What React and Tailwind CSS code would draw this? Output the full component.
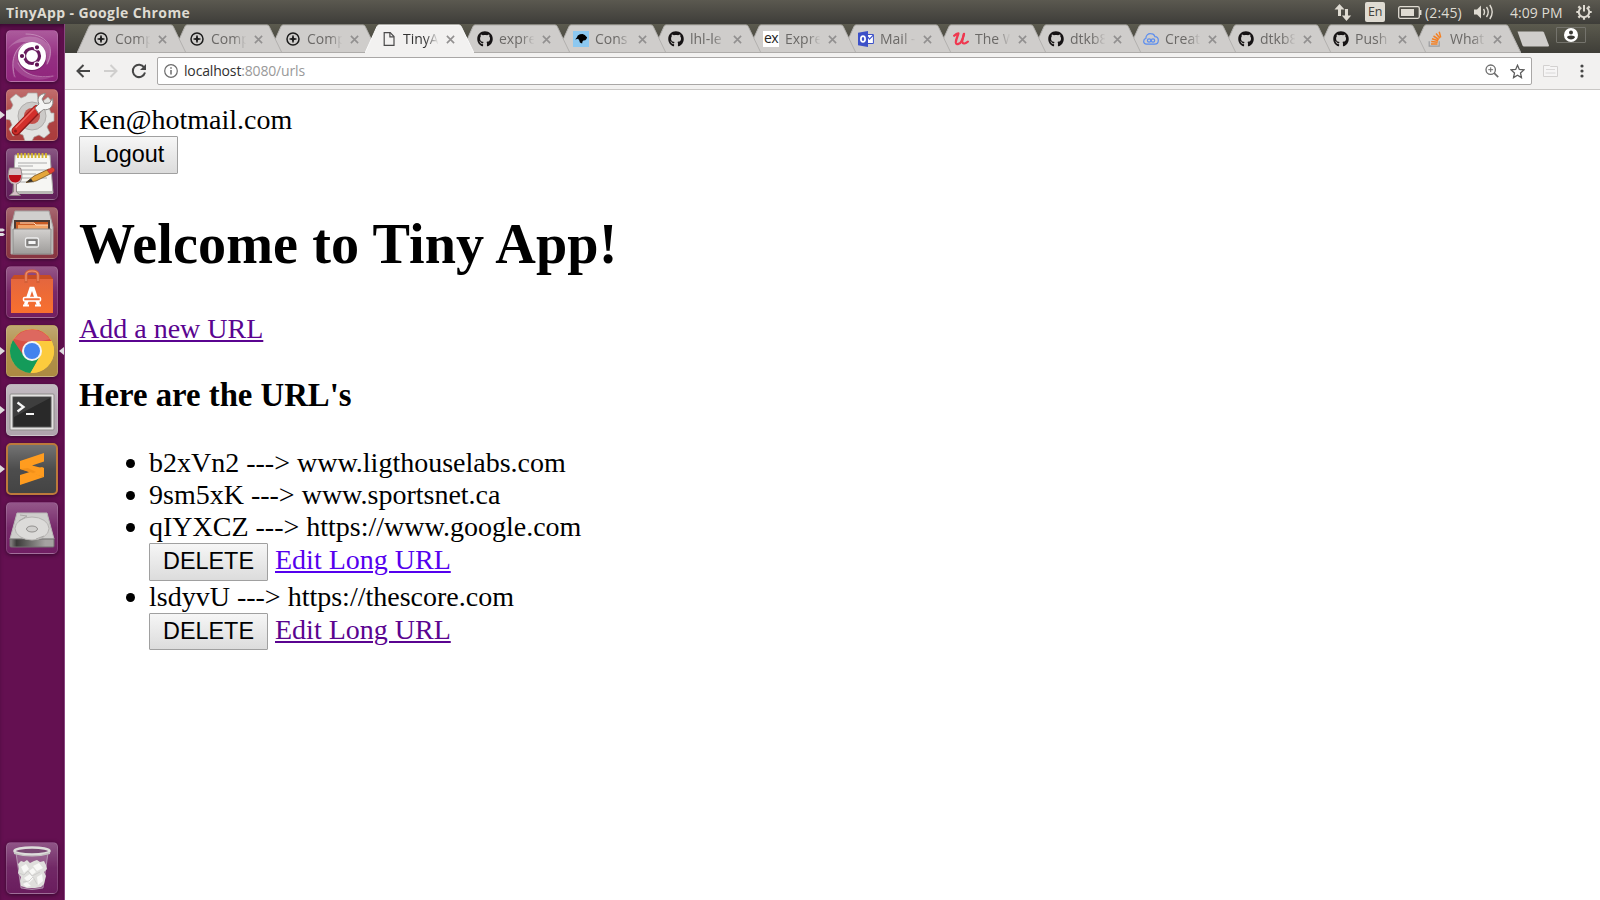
import React from "react";
import { FaGithub } from "react-icons/fa";

const UI = "font-['Open_Sans','Noto_Sans',sans-serif]";

/* ---------- favicons ---------- */
const Compass = () => (
  <svg viewBox="0 0 16 16" className="size-4 shrink-0">
    <circle cx="8" cy="8" r="6" fill="none" stroke="#1c1c1c" strokeWidth="1.5" />
    <path d="M8 4l1.1 2.9L12 8 9.1 9.1 8 12 6.9 9.1 4 8l2.9-1.1z" fill="#1c1c1c" />
    <path d="M8 4.6v6.8M4.6 8h6.8" stroke="#1c1c1c" strokeWidth="1.1" />
  </svg>
);
const Page = () => (
  <svg viewBox="0 0 16 16" className="size-4 shrink-0" fill="none" stroke="#4a4a4a" strokeWidth="1.2">
    <path d="M3.2 1.6h6l3.8 3.9v8.9H3.2z" />
    <path d="M8.9 1.8v4.1h4" />
  </svg>
);
const Github = () => <FaGithub className="size-4 shrink-0 text-[#161314]" />;
const Bird = () => (
  <svg viewBox="0 0 16 16" className="size-4 shrink-0">
    <rect width="16" height="16" fill="#8cc8f0" />
    <path d="M2.2 8.4l1.6-2 1-2 2.2-1.2 2.6-.1 2.2 1 1.3 1.5 1 .6-.6 1.8-1.2 1.3-1.9.1-.9 1.2-.4 1.9-2.2-1.1-.6-1.8-1.2-1.8z" fill="#000" />
  </svg>
);
const Express = () => (
  <span className="flex size-4 shrink-0 items-center justify-center bg-white pb-0.5 font-['Open_Sans',sans-serif] text-[14px] leading-none tracking-[-0.6px] text-[#222]">ex</span>
);
const Outlook = () => (
  <svg viewBox="0 0 16 16" className="size-4 shrink-0">
    <path d="M9 3.5h6.4v9H9z" fill="#fff" stroke="#3c50c8" strokeWidth="1" />
    <path d="M9.500 5.500l2 2.600 3.800-4" fill="none" stroke="#3c50c8" strokeWidth="1.200" />
    <path d="M0 1.800L10 0v16L0 14.200z" fill="#3c50c8" />
    <ellipse cx="5" cy="8" rx="2.100" ry="2.900" fill="none" stroke="#fff" strokeWidth="1.700" />
  </svg>
);
const Udemy = () => (
  <svg viewBox="0 0 16 16" className="size-4 shrink-0" fill="none" stroke="#ef3850" strokeLinecap="round" strokeLinejoin="round">
    <path d="M1.200 4.800C2.600 3.400 4 2.600 5.400 2.500 4.600 5.500 2.600 9 2.900 11.500c.5 3 4.200 1.300 5.600-1.300C9.800 8 10.500 5 11 2.800" strokeWidth="2.300" />
    <path d="M11 3C10.300 5.500 9 9.500 9.300 11.300c.5 2.200 3.700 1.200 5.700-.7" strokeWidth="2.100" />
  </svg>
);
const Cloud = () => (
  <svg viewBox="0 0 16 16" className="size-4 shrink-0" fill="none" stroke="#5b8def">
    <path d="M3.600 13.200C1.600 13 .6 11.700.7 10.200c0-1.500 1-2.500 2.200-2.800C2.800 4.500 5 2.600 7.600 2.700c2 0 3.700 1.100 4.300 2.900 2 .1 3.400 1.600 3.400 3.700 0 2.300-1.400 3.900-3.600 3.900z" strokeWidth="1.200" />
    <circle cx="6.100" cy="9.500" r="1.700" strokeWidth="1.200" />
    <circle cx="10" cy="9.500" r="1.700" strokeWidth="1.200" />
  </svg>
);
const Stack = () => (
  <svg viewBox="0 0 16 16" className="size-4 shrink-0" fill="none">
    <path d="M1.200 10.200v5h10v-5" stroke="#9a9c9f" strokeWidth="1.200" />
    <g stroke="#f48024" strokeWidth="1.500">
      <path d="M3 13h6.500M3.200 10.600l6.500.7M4 7.800l6.200 2M5.500 5l5.300 3.500M8 2.500l4 4.800M11.200.8l1.500 5.600" />
    </g>
  </svg>
);

const tabs = [
  ["Comp", Compass], ["Comp", Compass], ["Comp", Compass], ["TinyA", Page],
  ["expre", Github], ["Cons", Bird], ["lhl-le", Github], ["Expre", Express],
  ["Mail -", Outlook], ["The W", Udemy], ["dtkb8", Github], ["Creat", Cloud],
  ["dtkb8", Github], ["Push", Github], ["What", Stack],
];

function Tab({ label, Icon, active, z, wide }) {
  return (
    <div className={`relative h-[29px] w-[109px] shrink-0 ${wide ? "mr-[-13px]" : "mr-[-14px]"}`} style={{ zIndex: z }}>
      <svg viewBox="0 0 109 29" className="absolute inset-0 h-[29px] w-[109px]">
        <path d="M0 29L12 2.500Q12.800 1 14 1H94Q95.500 1 96.200 2.500L109 29z" fill={active ? "#f2f1f0" : "#cfcdcb"} />
        <path d="M0 29L12 2.500Q12.800 1 14 1H94Q95.500 1 96.200 2.500L109 29" fill="none" stroke={active ? "#fafafa" : "#b2b0ae"} strokeWidth="1" />
        {!active && <path d="M0 28.500H109" stroke="#aeacaa" />}
      </svg>
      <div className="relative flex h-[30px] items-center pl-4">
        <Icon />
        <span className={`ml-[6px] w-[37px] shrink-0 whitespace-nowrap text-[14px] leading-5 [mask-image:linear-gradient(to_right,black_60%,transparent_96%)] ${active ? "text-[#333]" : "text-[#6b6967]"}`}>{label}</span>
        <svg viewBox="0 0 10 10" className="ml-[6px] size-[9px]" stroke="#929090" strokeWidth="1.800">
          <path d="M1 1l8 8M9 1L1 9" />
        </svg>
      </div>
    </div>
  );
}

/* ---------- launcher artwork, each in a 52 x 52 box ---------- */
const Ubuntu = () => (
  <>
    <path d="M1 20C12 3 32 3 42 14c5 8 3 16-1 21-1-12-6-20-15-22C16 11 8 12 1 20z" fill="#fff" opacity=".2" />
    <path d="M8 48C3 32 8 17 20 12c-9 8-9 18-3 26s20 12 34 7c-16 8-34 6-43-8z" fill="#fff" opacity=".14" />
    <g fill="none" stroke="#fff" strokeLinecap="round" opacity=".3" strokeWidth="1">
      <path d="M20 4c12 0 20 4 24 13 1 5 0 12-3 17" />
      <path d="M9 47C4 32 8 18 20 13" />
      <path d="M47 46C33 48 18 46 12 33" />
    </g>
    <circle cx="26" cy="26.500" r="14.500" fill="#4d0c45" opacity=".4" />
    <circle cx="26" cy="26" r="14" fill="#fff" />
    <circle cx="26" cy="26" r="7.500" fill="none" stroke="#681a5d" strokeWidth="3.200" />
    <g fill="#5e1352" stroke="#fff" strokeWidth="1.200">
      <circle cx="16" cy="26" r="2.700" /><circle cx="31" cy="17.300" r="2.700" /><circle cx="31" cy="34.700" r="2.700" />
    </g>
  </>
);
const Settings = () => (
  <>
    <path d="M22 4h9l1 6 5 2 5-4 5 6-4 5 2 5h3v8l-5 2-2 4 3 6-6 5-5-3-5 2-2 4h-7l-2-6-5-2-5 3-4-7 3-4-2-5-5-1v-8l6-2 2-4-3-6 6-5 5 4 5-2z" fill="#e4e4e2" stroke="#aaa7a4" strokeWidth=".7" />
    <circle cx="26" cy="27" r="14" fill="#cccac8" stroke="#b0aeac" />
    <circle cx="26" cy="27" r="8" fill="#c4514b" />
    <path d="M10 42L31 20.500" stroke="#8f1a1a" strokeWidth="9" strokeLinecap="round" />
    <path d="M10 41.500L31 20" stroke="#d22f2b" strokeWidth="7" strokeLinecap="round" />
    <path d="M10 38.500L28 20" stroke="#ee6a61" strokeWidth="1.300" strokeLinecap="round" />
    <path d="M29 19l4-4c-3-6 1-10.500 6.500-10.500l-3.500 5.500 2.500 4.500 5-.5 3-4.500c2 7-3 12.500-9 11l-5 4z" fill="#f4f4f3" stroke="#8b8987" />
    <circle cx="9.500" cy="42" r="1.500" fill="#8e1c1c" />
  </>
);
const Notes = () => (
  <>
    <path d="M9 7h35l3 38H7z" fill="#f6f6f3" stroke="#a9a7a5" />
    <path d="M7 43h40v3H7z" fill="#b9b8b5" />
    <path d="M12 15h29M12 18h15M12 22h29M12 26h18M12 30h29M12 34h16" stroke="#aaa" strokeWidth="1" />
    <path d="M12 5v5M15.500 5v5M19 5v5M22.500 5v5M26 5v5M29.500 5v5M33 5v5M36.500 5v5M40 5v5" stroke="#d5b52b" strokeWidth="1.800" />
    <path d="M20 34.500l8-6.500 15-7 3 4-16 8z" fill="#e5a63a" stroke="#744f1d" strokeWidth=".8" />
    <path d="M41 22l5-2.500c2.500 0 3.500 3 1.500 4.500L44 26z" fill="#dc4035" stroke="#8d3427" strokeWidth=".5" />
    <path d="M20 34.500l5-4 2 3z" fill="#333" />
    <path d="M3.500 20h11c3 9 1 15-4 16v8l4 3.500h-11l4-3.500v-8c-5-1-7-7-4-16z" fill="#d5bfc6" stroke="#8b8181" strokeWidth=".9" />
    <path d="M3 27h12c.5 4-1.500 7-5.500 7.500C5 34.500 2.500 31 3 27z" fill="#bb0d1a" />
  </>
);
const Files = () => (
  <>
    <path d="M9 4h34l4 16v27H5V20z" fill="#d0cfcd" stroke="#a5a3a1" />
    <path d="M8 13h36v12H8z" fill="#4b3a33" />
    <path d="M10 15h32v9H10z" fill="#c95c24" /><path d="M12 18h30v5H12z" fill="#f1a467" />
    <path d="M14 16h14l2 2h12" stroke="#fdddc0" fill="none" />
    <path d="M7 22h38v25H7z" fill="url(#steel)" stroke="#8b8987" />
    <rect x="19.500" y="31" width="13" height="9" rx="1.500" fill="#8a8886" stroke="#eee" strokeWidth="1.300" />
    <rect x="22" y="33.500" width="8" height="4" fill="#f6f6f6" stroke="#666" strokeWidth=".7" />
  </>
);
const Software = () => (
  <>
    <path d="M5 13h42v34H5z" fill="url(#bag)" />
    <path d="M5 13l3-4h36l3 4z" fill="#c74c24" />
    <path d="M20 17V9q0-4 6-4t6 4v8" fill="none" stroke="#d35f38" strokeWidth="3.200" />
    <path d="M20 15V9q0-4 6-4t6 4v6" fill="none" stroke="#f19370" strokeWidth="1.200" />
    <g fill="none" stroke="#fff" strokeWidth="3.500"><path d="M19.500 39L25 22.500h2L32.500 39" /><path d="M17 39.500h6M29 39.500h6" strokeWidth="2.200" /></g>
    <rect x="17.500" y="31.500" width="17" height="3.600" rx="1" fill="#f26d3a" stroke="#fff" strokeWidth="1.500" />
  </>
);
const Chrome = () => (
  <>
    <circle cx="26" cy="26" r="22" fill="#fccb3d" />
    <path d="M26 26L7 15A22 22 0 0 0 24.500 48L34 31z" fill="#149b5a" />
    <path d="M7 15a22 22 0 0 1 38.500 1H26l-9.500 13z" fill="#d85045" />
    <path d="M26 16h19.500A22 22 0 0 1 24.500 48L34.500 31z" fill="#fccb3d" />
    <path d="M8 14a22 22 0 0 1 36 0Q26 20 8 14z" fill="#fff" opacity=".14" />
    <circle cx="26" cy="26" r="10" fill="#f5f5f5" />
    <circle cx="26" cy="26" r="8" fill="#4383ee" />
  </>
);
const Terminal = () => (
  <>
    <rect x="4" y="10" width="44" height="36" rx="1" fill="#e3e2e1" stroke="#8f8d8b" />
    <rect x="7" y="13" width="38" height="30" fill="#292929" stroke="#565656" />
    <path d="M8 14h36L8 33z" fill="#fff" opacity=".1" />
    <path d="M11.500 18.500l6 4.500-6 4.500" fill="none" stroke="#f5f5f5" strokeWidth="2.300" />
    <path d="M20 30h8" stroke="#f5f5f5" strokeWidth="2" />
  </>
);
const Sublime = () => (
  <>
    <path d="M14 25L38 34 14 42V32l13-4z" fill="#ff9c1f" />
    <path d="M14 18L38 10V18.500L26 22.500 38 25.500V34L14 26z" fill="#ff9c1f" />
    <path d="M38 34V25l-2-1-14 5z" fill="#ff9c1f" />
    <path d="M14 26l13 4 3-1-8-4z" fill="#e98916" opacity=".6" />
  </>
);
const Disk = () => (
  <>
    <path d="M11 11h30l7 26H4z" fill="#cfcecc" stroke="#b9b8b6" />
    <path d="M4 37h44v7q0 1-1 1H5q-1 0-1-1z" fill="url(#edge)" stroke="#737170" />
    <ellipse cx="26" cy="26.500" rx="17" ry="11.500" fill="#dcdbd9" stroke="#b4b2b0" />
    <ellipse cx="26" cy="27" rx="5.500" ry="3" fill="#d0cfcd" stroke="#92908e" />
    <path d="M14 13l7 1-8 5M30 37l8-3" fill="none" stroke="#aaa8a6" />
  </>
);
const Trash = () => (
  <>
    <path d="M10 11l5 35q11 3 22 0l5-35z" fill="#fff" opacity=".2" />
    <path d="M10 11l5 35q11 3 22 0l5-35" fill="none" stroke="#cfc3ce" opacity=".6" />
    <path d="M12 22l3-3 3 1 3-2 3 3 4-2 3-1 3 2 4-1 2 4 1 4-3 3 2 4-1 4-1 4-3 3-6 1-8 0-6-2-1-5 1-4-3-4 1-4z" fill="#dfdfdc" />
    <path d="M15 25l5-3 3 5-5 4zM27 24l6-3 4 5-6 3zM18 36l6-4 4 4-5 5zM31 35l5-3 1 7-5 4zM23 29l4-3 3 4-4 3zM17 42l4-2 4 4-5 1z" fill="#f8f8f6" />
    <path d="M13 31l5 2 4-4 4 5 8-4M17 40l6-1 4-4 4 7" fill="none" stroke="#c9c8c6" strokeWidth=".8" />
    <ellipse cx="26" cy="9" rx="17.500" ry="3.500" fill="#794a73" stroke="#dededc" strokeWidth="2.600" />
    <path d="M8 10q18 7 36 0v2q-18 5-36 0z" fill="#c6c5c3" />
  </>
);

const launcher = [
  [Ubuntu, "bg-[#90257c]"],
  [Settings, "bg-[#ab3c3c]", "l"],
  [Notes, "bg-[#62205a]"],
  [Files, "bg-[#883541]", "ll"],
  [Software, "bg-[#721e60]"],
  [Chrome, "bg-[#ac8b42]", "lr"],
  [Terminal, "bg-[#b0a5ae]", "l"],
  [Sublime, "bg-[#444] border-[#bd793b]! border-2!", "l"],
  [Disk, "bg-[#701f63]"],
];

function Tile({ Art, tone, marks = "" }) {
  return (
    <div className="relative flex h-[52px] w-full shrink-0 pl-[6px]">
      <div className={`flex size-[52px] items-center justify-center rounded-[5px] border border-white/15 bg-linear-to-b from-white/25 via-white/5 to-transparent shadow-[0_1px_4px_rgba(20,0,20,0.600)] ${tone}`}>
        <svg viewBox="0 0 52 52" className="size-[52px] shrink-0"><Art /></svg>
      </div>
      {marks.startsWith("l") && (
        <svg viewBox="0 0 5 10" className="absolute top-[21px] left-0 h-[10px] w-[5px]" fill="#dedbdd">
          {marks === "ll" ? <path d="M0 .5h3l2 1.500-2 1.500H0zM0 5h3l2 1.500L3 8H0z" /> : <path d="M0 1l5 4-5 4z" />}
        </svg>
      )}
      {marks === "lr" && (
        <svg viewBox="0 0 5 10" className="absolute top-[21px] right-0 h-[10px] w-[5px]" fill="#dedbdd"><path d="M5 1L0 5l5 4z" /></svg>
      )}
    </div>
  );
}

function Launcher() {
  return (
    <aside className="flex w-[65px] shrink-0 flex-col gap-[7px] border-r border-[#8b4580] bg-[#641051] pt-[6px] pb-[6px] shadow-[inset_0_4px_5px_-2px_rgba(20,0,20,0.600)]">
      <svg className="absolute size-0">
        <defs>
          <linearGradient id="steel" x1="0" y1="0" x2="0" y2="1"><stop stopColor="#d2d0ce" /><stop offset="1" stopColor="#9e9c9a" /></linearGradient>
          <linearGradient id="bag" x1="0" y1="0" x2="0" y2="1"><stop stopColor="#e4663e" /><stop offset="1" stopColor="#f8702e" /></linearGradient>
          <linearGradient id="edge"><stop stopColor="#8d8b89" /><stop offset=".15" stopColor="#3b3a39" /><stop offset=".8" stopColor="#a5a3a1" /></linearGradient>
        </defs>
      </svg>
      {launcher.map(([Art, tone, marks], i) => <Tile key={i} Art={Art} tone={tone} marks={marks} />)}
      <div className="mt-auto"><Tile Art={Trash} tone="bg-[#6a1d5e]" /></div>
    </aside>
  );
}

function MenuBar() {
  return (
    <header className={`flex h-6 shrink-0 items-center bg-linear-to-b from-[#5b5950] to-[#3e3d39] pr-[8px] pl-[6px] text-[14px] text-[#dfdbd2] ${UI}`}>
      <span className="text-[14px] font-bold tracking-[0.380px] whitespace-nowrap">TinyApp - Google Chrome</span>
      <svg viewBox="0 0 18 17" className="ml-auto h-[17px] w-[18px]" fill="#dfdbd2">
        <path d="M5.500 0L10.500 5.500H7V12H4V5.500H.5zM12.500 17L7.800 11.500h3.200V5h3v6.500h3.200z" />
      </svg>
      <span className="ml-[13px] flex h-5 w-5 items-center justify-center rounded-[2px] bg-[#dfdbd2] text-[12.500px] tracking-[-0.200px] text-[#42413c]">En</span>
      <svg viewBox="0 0 24 13" className="ml-[13px] h-[13px] w-6" fill="none" stroke="#dfdbd2">
        <rect x=".7" y=".7" width="20.600" height="11.600" rx="1.500" strokeWidth="1.300" />
        <rect x="3" y="3" width="13" height="7" fill="#dfdbd2" stroke="none" />
        <path d="M22.700 4v5" strokeWidth="1.500" />
      </svg>
      <span className="ml-[3px] w-[37px] whitespace-nowrap tracking-[0.150px]">(2:45)</span>
      <svg viewBox="0 0 21 16" className="ml-[12px] h-4 w-[21px]" fill="none" stroke="#dfdbd2" strokeWidth="1.400">
        <path d="M0 5.500h3l4-4v13l-4-4H0z" fill="#dfdbd2" stroke="none" />
        <path d="M9.500 5q2 3 0 6M12.500 3q3.500 5 0 10M15.800 1q4.800 7 0 14" />
      </svg>
      <span className="ml-[15px] w-[53px] whitespace-nowrap tracking-[0.050px]">4:09 PM</span>
      <svg viewBox="0 0 16 16" className="ml-[13px] size-4" fill="none" stroke="#dfdbd2">
        <path d="M5.300 3.600a5.200 5.200 0 1 0 5.400 0" strokeWidth="1.900" />
        <path d="M8 1v6.500" strokeWidth="2" />
        <path d="M3.800 3.800L2.400 2.400M2.500 8H.3M4 12l-1.600 1.600M8 13.500v2.300M12 12l1.600 1.600M13.500 8h2.200M12.200 3.800l1.400-1.400" strokeWidth="2.200" />
      </svg>
    </header>
  );
}

function TabStrip() {
  return (
    <div className={`flex h-[29px] shrink-0 bg-linear-to-b from-[#5b5a4e] to-[#3f3e38] pl-[12px] ${UI}`}>
      {tabs.map(([label, Icon], i) => (
        <Tab key={i} label={label} Icon={Icon} active={i === 3} wide={i < 5} z={i === 3 ? 30 : 20 - i} />
      ))}
      <svg viewBox="0 0 34 16" className="mt-[7px] ml-[9px] h-4 w-[34px] shrink-0"><path d="M1.500.5h25q1 0 1.500 1l5 13q0 1-1 1H8q-1 0-1.500-1z" fill="#cfcdcb" /></svg>
      <div className="mt-[3px] ml-[6px] flex h-[16px] w-[30px] shrink-0 items-center justify-center rounded-[1px] border border-[#74736c]">
        <svg viewBox="0 0 14 14" className="size-[14px]"><circle cx="7" cy="7" r="7" fill="#fff" /><circle cx="7" cy="4.400" r="2" fill="#3b3a35" /><path d="M3 9.500q0-2 4-2t4 2q-1.500 2-4 2t-4-2z" fill="#3b3a35" /></svg>
      </div>
    </div>
  );
}

function Toolbar() {
  return (
    <div className={`flex h-[37px] shrink-0 items-center border-b border-[#c9c7c5] bg-[#f2f1f0] pl-[11px] ${UI}`}>
      <svg viewBox="0 0 14 14" className="size-[14px]" fill="none" stroke="#464646" strokeWidth="2"><path d="M14 7H1.500M7.500 1L1.500 7l6 6" /></svg>
      <svg viewBox="0 0 14 14" className="ml-[14px] size-[14px]" fill="none" stroke="#d0cfce" strokeWidth="2"><path d="M0 7h12.500M6.500 1l6 6-6 6" /></svg>
      <svg viewBox="0 0 16 16" className="ml-[13px] size-4" fill="none" stroke="#464646" strokeWidth="2"><path d="M13.200 4.500A6.200 6.200 0 1 0 14 9.500" /><path d="M15 1v6H9z" fill="#464646" stroke="none" /></svg>
      <div className="ml-[10px] flex h-[28px] w-[1375px] items-center rounded-[2px] border border-[#a9a7a6] bg-white pr-[6px] pl-[6px]">
        <svg viewBox="0 0 14 14" className="size-[14px]" fill="none" stroke="#6c6c6c"><circle cx="7" cy="7" r="6.300" strokeWidth="1.200" /><path d="M7 6v4.500M7 3.300v1.500" strokeWidth="1.500" /></svg>
        <span className="ml-[6px] pb-[2px] text-[14px] tracking-[-0.160px] text-[#303030]">localhost<span className="text-[#999]">:8080/urls</span></span>
        <svg viewBox="0 0 14 14" className="ml-auto size-[14px]" fill="none" stroke="#6c6c6c"><circle cx="5.700" cy="5.700" r="4.700" strokeWidth="1.300" /><path d="M9.200 9.200l4 4" strokeWidth="1.700" /><path d="M3.300 5.700h4.800M5.700 3.300v4.800" /></svg>
        <svg viewBox="0 0 14 14" className="ml-[11px] size-[15px]" fill="none" stroke="#5c5c5c" strokeWidth="1.200"><path d="M7 1.200l1.700 3.900 4.300.4-3.200 2.900.9 4.300L7 10.500l-3.700 2.200.9-4.300L1 5.500l4.300-.4z" /></svg>
      </div>
      <svg viewBox="0 0 15 12" className="ml-[11px] h-[12px] w-[15px]" fill="#f6f5f5" stroke="#d3d1d0"><path d="M.5.5h6l1 1h7v10H.5z" /><path d="M3 4.500h9M2.500 8h10" strokeWidth=".8" /></svg>
      <svg viewBox="0 0 4 14" className="ml-[22px] h-[14px] w-1" fill="#464646"><circle cx="2" cy="2" r="1.600" /><circle cx="2" cy="7" r="1.600" /><circle cx="2" cy="12" r="1.600" /></svg>
    </div>
  );
}

const Btn = ({ children, className }) => (
  <button className={`flex items-center justify-center rounded-[1px] border border-[#a0a0a0] bg-linear-to-b from-[#f6f6f6] to-[#dcdcdc] font-['Liberation_Sans',Arial,sans-serif] text-[23.400px] leading-none text-black ${className}`}>{children}</button>
);

const Entry = ({ children }) => (
  <div className="flex h-8 items-center">
    <span className="mr-[14px] ml-[-23px] size-[9px] rounded-full bg-black" />
    <span>{children}</span>
  </div>
);

const Actions = ({ color, height }) => (
  <div className={`flex ${height}`}>
    <Btn className={`w-[119px] ${height}`}>DELETE</Btn>
    <a className={`ml-[7px] pt-px underline decoration-2 underline-offset-[2px] ${color}`}>Edit Long URL</a>
  </div>
);

function Content() {
  return (
    <main className="flex flex-1 flex-col items-start bg-white pt-[14px] pl-[14px] font-['Liberation_Serif','Times_New_Roman',serif] text-[28px] leading-8 whitespace-nowrap text-black">
      <div>Ken@hotmail.com</div>
      <Btn className="h-[38px] w-[99px]">Logout</Btn>
      <h1 className="mt-[38px] text-[56.200px] leading-[64px] font-bold tracking-[0.100px]">Welcome to Tiny App!</h1>
      <a className="mt-[37px] text-[#5a0490] underline decoration-2 underline-offset-[2px]">Add a new URL</a>
      <h3 className="mt-[31px] text-[32.750px] leading-[38px] font-bold">Here are the URL's</h3>
      <ul className="mt-[33px] pl-[70px]">
        <li><Entry>b2xVn2 ---&gt; www.ligthouselabs.com</Entry></li>
        <li><Entry>9sm5xK ---&gt; www.sportsnet.ca</Entry></li>
        <li><Entry>qIYXCZ ---&gt; https://www.google.com</Entry><Actions color="text-[#5500ee]" height="h-[38px]" /></li>
        <li><Entry>lsdyvU ---&gt; https://thescore.com</Entry><Actions color="text-[#5a0490]" height="h-[37px]" /></li>
      </ul>
    </main>
  );
}

export default function App() {
  return (
    <div className="flex h-[900px] w-[1600px] flex-col overflow-hidden bg-white">
      <MenuBar />
      <div className="flex min-h-0 flex-1">
        <Launcher />
        <div className="flex min-w-0 flex-1 flex-col">
          <TabStrip />
          <Toolbar />
          <Content />
        </div>
      </div>
    </div>
  );
}
